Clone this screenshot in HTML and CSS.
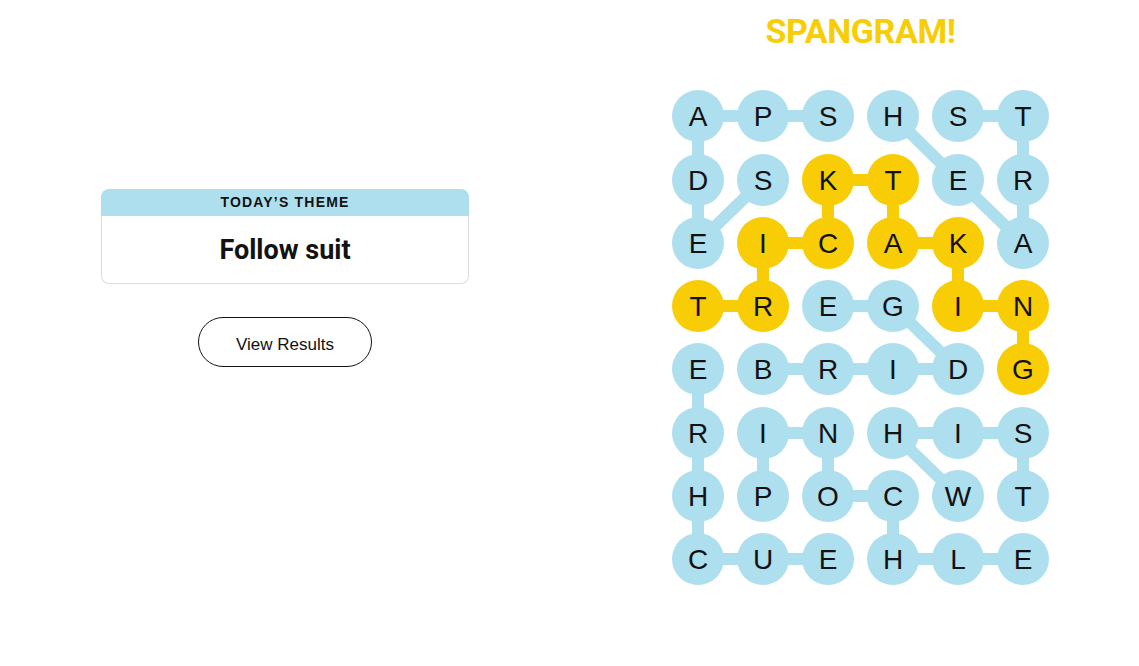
FILE: index.html
```html
<!DOCTYPE html>
<html lang="en">
<head>
<meta charset="utf-8">
<title>Strands</title>
<link rel="stylesheet" href="styles.css">
</head>
<body>
<main class="page">
  <section class="left">
    <div class="card">
      <div class="card-head">TODAY’S THEME</div>
      <div class="card-body">Follow suit</div>
    </div>
    <button class="results-btn" type="button">View Results</button>
  </section>
  <section class="right">
    <h1 class="spangram">SPANGRAM!</h1>
    <svg class="board" width="377" height="495" viewBox="0 0 377 495" xmlns="http://www.w3.org/2000/svg">
      <g class="link blue">
        <polyline points="156,26 91,26 26,26 26,90 26,153 91,90"/>
        <polyline points="221,26 286,90 351,153 351,90 351,26 286,26"/>
        <polyline points="91,279 156,279 221,279 286,279 221,216 156,216"/>
        <polyline points="156,469 91,469 26,469 26,406 26,343 26,279"/>
        <polyline points="91,406 91,343 156,343 156,406 221,406 221,469 286,469 351,469"/>
        <polyline points="286,406 221,343 286,343 351,343 351,406"/>
      </g>
      <g class="link gold">
        <polyline points="26,216 91,216 91,153 156,153 156,90 221,90 221,153 286,153 286,216 351,216 351,279"/>
      </g>
      <g class="dots">
        <circle class="b" cx="26" cy="26" r="26"/><circle class="b" cx="91" cy="26" r="26"/><circle class="b" cx="156" cy="26" r="26"/><circle class="b" cx="221" cy="26" r="26"/><circle class="b" cx="286" cy="26" r="26"/><circle class="b" cx="351" cy="26" r="26"/>
        <circle class="b" cx="26" cy="90" r="26"/><circle class="b" cx="91" cy="90" r="26"/><circle class="y" cx="156" cy="90" r="26"/><circle class="y" cx="221" cy="90" r="26"/><circle class="b" cx="286" cy="90" r="26"/><circle class="b" cx="351" cy="90" r="26"/>
        <circle class="b" cx="26" cy="153" r="26"/><circle class="y" cx="91" cy="153" r="26"/><circle class="y" cx="156" cy="153" r="26"/><circle class="y" cx="221" cy="153" r="26"/><circle class="y" cx="286" cy="153" r="26"/><circle class="b" cx="351" cy="153" r="26"/>
        <circle class="y" cx="26" cy="216" r="26"/><circle class="y" cx="91" cy="216" r="26"/><circle class="b" cx="156" cy="216" r="26"/><circle class="b" cx="221" cy="216" r="26"/><circle class="y" cx="286" cy="216" r="26"/><circle class="y" cx="351" cy="216" r="26"/>
        <circle class="b" cx="26" cy="279" r="26"/><circle class="b" cx="91" cy="279" r="26"/><circle class="b" cx="156" cy="279" r="26"/><circle class="b" cx="221" cy="279" r="26"/><circle class="b" cx="286" cy="279" r="26"/><circle class="y" cx="351" cy="279" r="26"/>
        <circle class="b" cx="26" cy="343" r="26"/><circle class="b" cx="91" cy="343" r="26"/><circle class="b" cx="156" cy="343" r="26"/><circle class="b" cx="221" cy="343" r="26"/><circle class="b" cx="286" cy="343" r="26"/><circle class="b" cx="351" cy="343" r="26"/>
        <circle class="b" cx="26" cy="406" r="26"/><circle class="b" cx="91" cy="406" r="26"/><circle class="b" cx="156" cy="406" r="26"/><circle class="b" cx="221" cy="406" r="26"/><circle class="b" cx="286" cy="406" r="26"/><circle class="b" cx="351" cy="406" r="26"/>
        <circle class="b" cx="26" cy="469" r="26"/><circle class="b" cx="91" cy="469" r="26"/><circle class="b" cx="156" cy="469" r="26"/><circle class="b" cx="221" cy="469" r="26"/><circle class="b" cx="286" cy="469" r="26"/><circle class="b" cx="351" cy="469" r="26"/>
      </g>
      <g class="letters">
        <text x="26" y="36">A</text><text x="91" y="36">P</text><text x="156" y="36">S</text><text x="221" y="36">H</text><text x="286" y="36">S</text><text x="351" y="36">T</text>
        <text x="26" y="100">D</text><text x="91" y="100">S</text><text x="156" y="100">K</text><text x="221" y="100">T</text><text x="286" y="100">E</text><text x="351" y="100">R</text>
        <text x="26" y="163">E</text><text x="91" y="163">I</text><text x="156" y="163">C</text><text x="221" y="163">A</text><text x="286" y="163">K</text><text x="351" y="163">A</text>
        <text x="26" y="226">T</text><text x="91" y="226">R</text><text x="156" y="226">E</text><text x="221" y="226">G</text><text x="286" y="226">I</text><text x="351" y="226">N</text>
        <text x="26" y="289">E</text><text x="91" y="289">B</text><text x="156" y="289">R</text><text x="221" y="289">I</text><text x="286" y="289">D</text><text x="351" y="289">G</text>
        <text x="26" y="353">R</text><text x="91" y="353">I</text><text x="156" y="353">N</text><text x="221" y="353">H</text><text x="286" y="353">I</text><text x="351" y="353">S</text>
        <text x="26" y="416">H</text><text x="91" y="416">P</text><text x="156" y="416">O</text><text x="221" y="416">C</text><text x="286" y="416">W</text><text x="351" y="416">T</text>
        <text x="26" y="479">C</text><text x="91" y="479">U</text><text x="156" y="479">E</text><text x="221" y="479">H</text><text x="286" y="479">L</text><text x="351" y="479">E</text>
      </g>
    </svg>
  </section>
</main>
</body>
</html>
```

FILE: styles.css
```css
* { box-sizing: border-box; }

html, body {
  margin: 0;
  padding: 0;
  background: #ffffff;
  color: #121212;
  font-family: "Liberation Sans", Arial, sans-serif;
}

.page {
  display: flex;
  width: 1139px;
  height: 666px;
}

.left {
  width: 570px;
  padding-top: 189px;
  display: flex;
  flex-direction: column;
  align-items: center;
}

.card {
  width: 368px;
  display: flex;
  flex-direction: column;
}

.card-head {
  height: 27px;
  background: #aedfee;
  border-radius: 8px 8px 0 0;
  font-weight: 700;
  font-size: 14px;
  letter-spacing: 1.2px;
  line-height: 27px;
  text-align: center;
  color: #121212;
}

.card-body {
  height: 68px;
  border: 1px solid #dcdcdc;
  border-top: none;
  border-radius: 0 0 8px 8px;
  display: flex;
  align-items: center;
  justify-content: center;
  font-family: Roboto, "Liberation Sans", sans-serif;
  font-weight: 700;
  font-size: 27px;
  letter-spacing: 0;
  color: #121212;
}

.results-btn {
  margin-top: 33px;
  width: 174px;
  height: 50px;
  border: 1px solid #121212;
  border-radius: 25px;
  background: #ffffff;
  font-family: "Liberation Sans", Arial, sans-serif;
  font-size: 17px;
  line-height: 50px;
  color: #121212;
  padding: 2px 0 0;
}

.right {
  margin-left: 102px;
  width: 377px;
  display: flex;
  flex-direction: column;
  align-items: center;
}

.spangram {
  margin: 11px 0 0;
  height: 40px;
  line-height: 40px;
  font-family: Roboto, "Liberation Sans", sans-serif;
  font-weight: 700;
  font-size: 34px;
  letter-spacing: -0.4px;
  color: #f8cd05;
}

.board {
  display: block;
  margin-top: 39px;
}

.link polyline {
  fill: none;
  stroke-width: 12;
  stroke-linejoin: round;
  stroke-linecap: round;
}

.link.blue polyline { stroke: #aedfee; }
.link.gold polyline { stroke: #f8cd05; }

.dots .b { fill: #aedfee; }
.dots .y { fill: #f8cd05; }

.letters text {
  font-family: "Liberation Sans", Arial, sans-serif;
  font-size: 28px;
  fill: #121212;
  text-anchor: middle;
}
```
